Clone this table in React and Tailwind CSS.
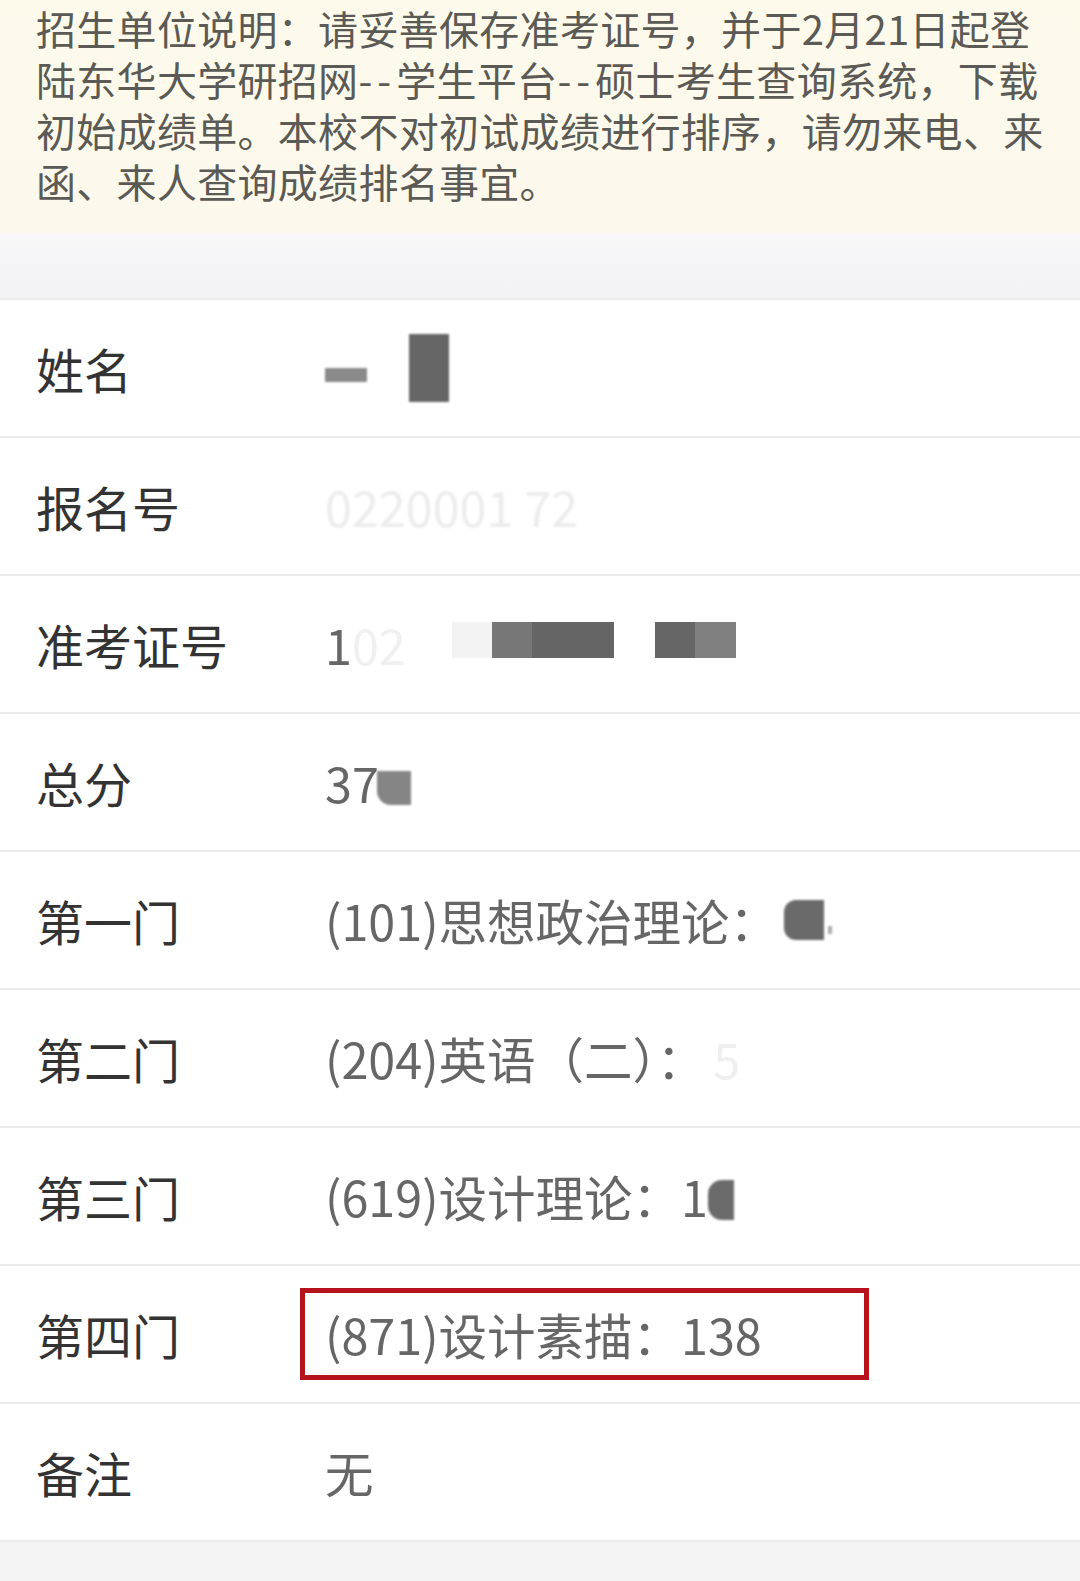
import React from 'react';

const font = { fontFamily: '"Noto Sans CJK SC", "Noto Sans", sans-serif' };

function Block({ className }) {
  return <span className={`inline-block align-middle ${className}`} />;
}

function Dash() {
  return <span className="tracking-[5px]">--</span>;
}

function Row({ label, children }) {
  return (
    <div className="flex h-[138px] items-center border-b-2 border-[#ececec] bg-white pl-[36px]">
      <div className="w-[289px] shrink-0 text-[48px] leading-none text-[#333333]">{label}</div>
      <div className="flex items-center text-[48.5px] leading-none text-[#666666]">{children}</div>
    </div>
  );
}

export default function App() {
  return (
    <main className="min-h-[1581px] w-[1080px] bg-[#f4f4f5]" style={font}>
      <section className="h-[233px] bg-gradient-to-b from-[#fdfaec] to-[#fcf9ec] px-[36px] pt-[3px] text-[40px] leading-[51px] tracking-[0.3px] text-[#5b5a54]">
        <p>招生单位说明：请妥善保存准考证号，并于2月21日起登</p>
        <p>
          陆东华大学研招网<Dash />学生平台<Dash />硕士考生查询系统，下载
        </p>
        <p>初始成绩单。本校不对初试成绩进行排序，请勿来电、来</p>
        <p>函、来人查询成绩排名事宜。</p>
      </section>

      <div className="h-[67px] border-b-2 border-[#ebebeb] bg-gradient-to-b from-[#f7f7f8] to-[#f2f2f4]" />

      <section>
        <Row label="姓名">
          <Block className="mt-[14px] h-[14px] w-[42px] bg-[#8a8a8a] blur-[1px]" />
          <Block className="ml-[42px] h-[68px] w-[40px] bg-[#666666] blur-[1px]" />
        </Row>
        <Row label="报名号">
          <span className="text-[#ececec] blur-[1px]">0220001 72</span>
        </Row>
        <Row label="准考证号">
          <span>1</span>
          <span className="inline-block w-[100px] text-[#f0f0f0]">02</span>
          <Block className="-mt-[8px] h-[36px] w-[40px] bg-[#f3f3f3]" />
          <Block className="-mt-[8px] h-[36px] w-[40px] bg-[#777777]" />
          <Block className="-mt-[8px] h-[36px] w-[82px] bg-[#656565]" />
          <Block className="ml-[41px] -mt-[8px] h-[36px] w-[40px] bg-[#666666]" />
          <Block className="-mt-[8px] h-[36px] w-[41px] bg-[#808080]" />
        </Row>
        <Row label="总分">
          <span>37</span>
          <Block className="-ml-[2px] mt-[12px] h-[34px] w-[34px] rounded-bl-[14px] bg-[#858585] blur-[1px]" />
        </Row>
        <Row label="第一门">
          <span>(101)思想政治理论：</span>
          <Block className="ml-[6px] h-[40px] w-[40px] rounded-l-[12px] bg-[#6a6a6a] blur-[1px]" />
          <Block className="ml-[4px] mt-[20px] h-[8px] w-[4px] bg-[#aaaaaa] blur-[1px]" />
        </Row>
        <Row label="第二门">
          <span>(204)英语（二）：</span>
          <span className="ml-[8px] text-[#efefef]">5</span>
        </Row>
        <Row label="第三门">
          <span>(619)设计理论：1</span>
          <Block className="mt-[8px] h-[40px] w-[26px] rounded-l-[14px] bg-[#6b6b6b] blur-[1px]" />
        </Row>
        <Row label="第四门">
          <div className="-ml-[25px] flex h-[92px] w-[569px] items-center border-[5px] border-[#b5121b] pl-[20px]">
            (871)设计素描：138
          </div>
        </Row>
        <Row label="备注">
          <span>无</span>
        </Row>
      </section>
    </main>
  );
}
